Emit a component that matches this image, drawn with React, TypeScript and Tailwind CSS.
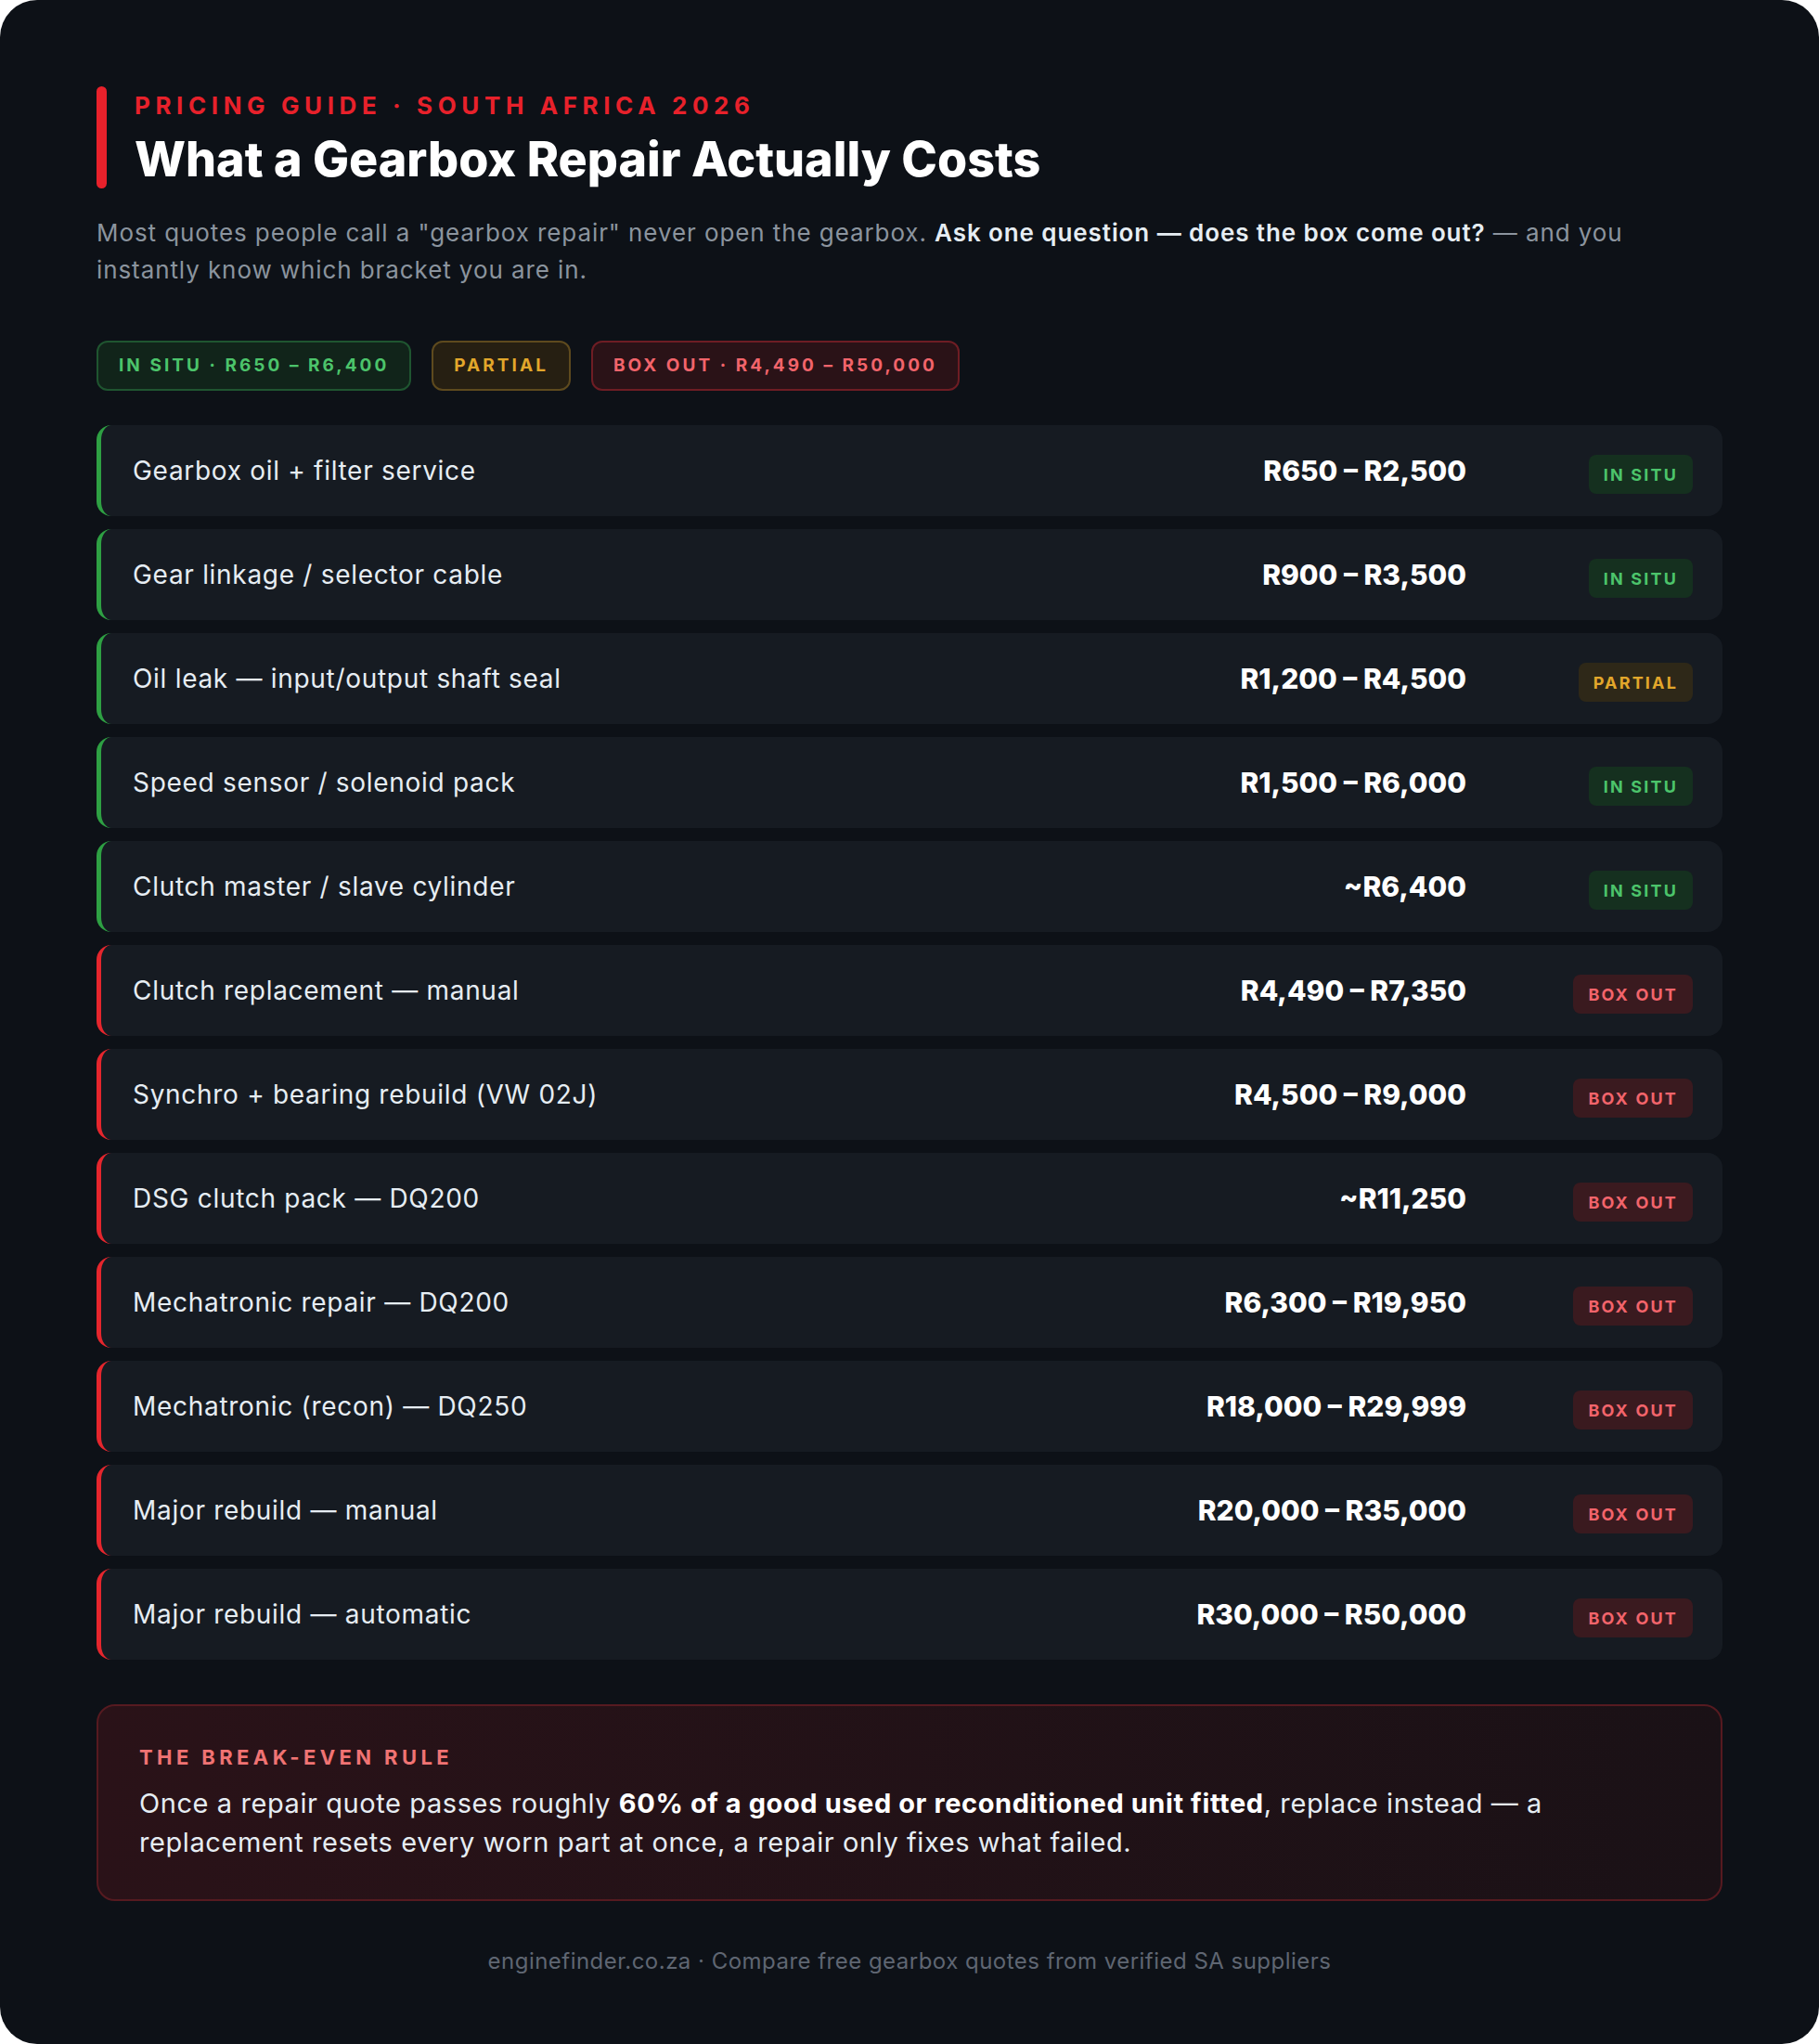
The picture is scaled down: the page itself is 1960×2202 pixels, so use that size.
import React from "react";

type Kind = "situ" | "partial" | "out";

interface Row {
  name: string;
  price: string;
  kind: Kind;
  edge: "green" | "red";
}

const rows: Row[] = [
  { name: "Gearbox oil + filter service", price: "R650 – R2,500", kind: "situ", edge: "green" },
  { name: "Gear linkage / selector cable", price: "R900 – R3,500", kind: "situ", edge: "green" },
  { name: "Oil leak — input/output shaft seal", price: "R1,200 – R4,500", kind: "partial", edge: "green" },
  { name: "Speed sensor / solenoid pack", price: "R1,500 – R6,000", kind: "situ", edge: "green" },
  { name: "Clutch master / slave cylinder", price: "~R6,400", kind: "situ", edge: "green" },
  { name: "Clutch replacement — manual", price: "R4,490 – R7,350", kind: "out", edge: "red" },
  { name: "Synchro + bearing rebuild (VW 02J)", price: "R4,500 – R9,000", kind: "out", edge: "red" },
  { name: "DSG clutch pack — DQ200", price: "~R11,250", kind: "out", edge: "red" },
  { name: "Mechatronic repair — DQ200", price: "R6,300 – R19,950", kind: "out", edge: "red" },
  { name: "Mechatronic (recon) — DQ250", price: "R18,000 – R29,999", kind: "out", edge: "red" },
  { name: "Major rebuild — manual", price: "R20,000 – R35,000", kind: "out", edge: "red" },
  { name: "Major rebuild — automatic", price: "R30,000 – R50,000", kind: "out", edge: "red" },
];

const badgeStyles: Record<Kind, { label: string; cls: string }> = {
  situ: { label: "IN SITU", cls: "bg-[#15301f] text-[#4cc46b]" },
  partial: { label: "PARTIAL", cls: "bg-[#2e2818] text-[#e2a72b]" },
  out: { label: "BOX OUT", cls: "bg-[#3a1a1f] text-[#f2646b]" },
};

const Badge = ({ kind }: { kind: Kind }) => {
  const b = badgeStyles[kind];
  return (
    <span
      className={`${b.cls} h-[42px] px-4 rounded-lg flex items-center text-[18px] font-bold tracking-[0.12em]`}>
      {b.label}
    </span>
  );
};

export default function App() {
  return (
    <div className="w-[1960px] h-[2202px] bg-white" style={{ fontFamily: "Inter, 'Noto Sans', sans-serif" }}>
      <div className="w-full h-full rounded-[40px] bg-[#0d1117] px-[104px] pt-[93px] flex flex-col">
        {/* header */}
        <div className="flex">
          <div className="w-[11px] h-[110px] rounded-full bg-[#e8212b]" />
          <div className="ml-[30px] flex flex-col">
            <p className="text-[26px] leading-[42px] font-bold tracking-[0.215em] text-[#e8212b]">
              PRICING GUIDE · SOUTH AFRICA 2026
            </p>
            <h1 className="mt-1 text-[52px] leading-[66px] font-extrabold text-white">
              What a Gearbox Repair Actually Costs
            </h1>
          </div>
        </div>

        <p className="mt-[26px] text-[26px] leading-[40px] tracking-[0.035em] text-[#8b949e]">
          Most quotes people call a "gearbox repair" never open the gearbox.{" "}
          <b className="font-semibold text-[#e6edf3]">Ask one question — does the box come out?</b> — and you
          <br />
          instantly know which bracket you are in.
        </p>

        {/* legend chips */}
        <div className="mt-[56px] flex gap-[22px]">
          <span className="h-[54px] px-[22px] flex items-center rounded-xl border-2 border-[#1f5530] bg-[#11241a] text-[#4cc46b] text-[19px] font-bold tracking-[0.16em]">
            IN SITU · R650 – R6,400
          </span>
          <span className="h-[54px] px-[22px] flex items-center rounded-xl border-2 border-[#5e4a1e] bg-[#261f12] text-[#e2a72b] text-[19px] font-bold tracking-[0.16em]">
            PARTIAL
          </span>
          <span className="h-[54px] px-[22px] flex items-center rounded-xl border-2 border-[#6e1d24] bg-[#2a1217] text-[#f2646b] text-[19px] font-bold tracking-[0.16em]">
            BOX OUT · R4,490 – R50,000
          </span>
        </div>

        {/* price rows */}
        <div className="mt-[37px] flex flex-col gap-[14px]">
          {rows.map((r) => (
            <div
              key={r.name}
              className={`h-[98px] rounded-2xl bg-[#161b22] border-l-[5px] ${
                r.edge === "green" ? "border-[#2ea043]" : "border-[#e5262d]"
              } pl-[34px] pr-[32px] flex items-center`}>
              <span className="flex-1 text-[28px] tracking-[0.025em] text-[#e6edf3]">{r.name}</span>
              <span className="text-[30px] font-extrabold text-white">{r.price}</span>
              <div className="w-[244px] mt-2 flex justify-end">
                <Badge kind={r.kind} />
              </div>
            </div>
          ))}
        </div>

        {/* break-even */}
        <div className="mt-[48px] h-[212px] rounded-[20px] border-2 border-[#561a20] bg-gradient-to-r from-[#2a1218] to-[#1a1116] px-[44px] flex flex-col justify-center">
          <p className="text-[22px] leading-[30px] font-bold tracking-[0.2em] text-[#f07373]">THE BREAK-EVEN RULE</p>
          <p className="mt-[14px] text-[29px] leading-[42px] tracking-[0.02em] text-[#e6edf3]">
            Once a repair quote passes roughly{" "}
            <b className="font-bold text-white">60% of a good used or reconditioned unit fitted</b>, replace instead — a
            <br />
            replacement resets every worn part at once, a repair only fixes what failed.
          </p>
        </div>

        <p className="mt-[49px] text-center text-[24px] leading-[32px] tracking-[0.02em] text-[#5f6672]">
          enginefinder.co.za · Compare free gearbox quotes from verified SA suppliers
        </p>
      </div>
    </div>
  );
}
